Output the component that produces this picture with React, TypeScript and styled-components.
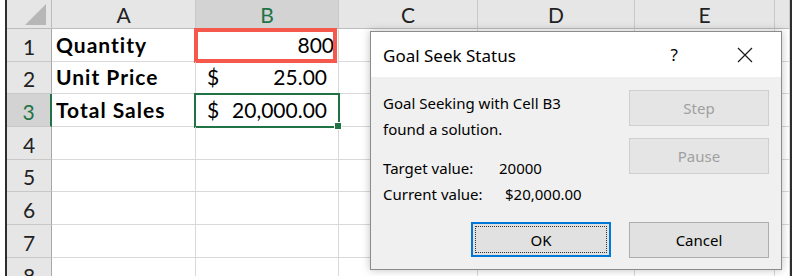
import { createGlobalStyle, styled } from 'styled-components';

const GlobalStyle = createGlobalStyle`
  html, body {
    margin: 0;
    padding: 0;
    background: #ffffff;
  }
`;

const columns = ['A', 'B', 'C', 'D', 'E', ''];
const rowHeights = [33, 32, 33, 33, 32, 33, 33, 33];

type CellData = { text?: string; bold?: boolean; align?: 'left' | 'right' | 'split'; mark?: 'red' | 'green' };

const data: Record<number, Record<number, CellData>> = {
  1: { 0: { text: 'Quantity', bold: true }, 1: { text: '800', align: 'right', mark: 'red' } },
  2: { 0: { text: 'Unit Price', bold: true }, 1: { text: '25.00', align: 'split' } },
  3: { 0: { text: 'Total Sales', bold: true }, 1: { text: '20,000.00', align: 'split', mark: 'green' } },
};

const App = () => {
  return (
    <Page>
      <GlobalStyle />
      <Sheet>
        <Corner>
          <CornerTriangle />
        </Corner>
        {columns.map((col, i) => (
          <ColHeader key={col + i} $active={col === 'B'}>
            {col}
          </ColHeader>
        ))}
        {rowHeights.map((h, r) => {
          const row = r + 1;
          return [
            <RowHeader key={`h${row}`} $active={row === 3} $height={h}>
              {row}
            </RowHeader>,
            ...columns.map((_, c) => {
              const cell = data[row]?.[c];
              return (
                <Cell key={`${row}-${c}`} $bold={cell?.bold} $align={cell?.align} $mark={cell?.mark}>
                  {cell?.align === 'split' && <span>$</span>}
                  {cell?.text && <span>{cell.text}</span>}
                  {cell?.mark === 'green' && <FillHandle />}
                </Cell>
              );
            }),
          ];
        })}

        <Dialog>
          <TitleBar>
            <Title>Goal Seek Status</Title>
            <TitleIcons>
              <HelpMark>?</HelpMark>
              <svg width="16" height="16" viewBox="0 0 16 16">
                <path d="M1 1 L15 15 M15 1 L1 15" stroke="#1a1a1a" strokeWidth="1.2" fill="none" />
              </svg>
            </TitleIcons>
          </TitleBar>
          <DialogBody>
            <TopRow>
              <Messages>
                <Line>Goal Seeking with Cell B3</Line>
                <Line>found a solution.</Line>
                <Spacer />
                <Line>
                  <Label $width={116}>Target value:</Label>
                  <span>20000</span>
                </Line>
                <Line>
                  <Label $width={122}>Current value:</Label>
                  <span>$20,000.00</span>
                </Line>
              </Messages>
              <SideButtons>
                <Button disabled>Step</Button>
                <Button disabled>Pause</Button>
              </SideButtons>
            </TopRow>
            <Footer>
              <Button $default>
                <FocusRing>OK</FocusRing>
              </Button>
              <Button>Cancel</Button>
            </Footer>
          </DialogBody>
        </Dialog>
      </Sheet>
    </Page>
  );
};
export default App;

const sheetFont = `Lato, "Liberation Sans", sans-serif`;
const uiFont = `"Noto Sans", "Open Sans", sans-serif`;
const green = '#217346';

const Page = styled.div`
  width: 793px;
  height: 276px;
  padding-left: 5px;
  box-sizing: border-box;
  overflow: hidden;
`;

const Sheet = styled.div`
  position: relative;
  width: 787px;
  box-sizing: border-box;
  border-left: 2px solid #2e2e2e;
  border-right: 2px solid #2e2e2e;
  display: grid;
  grid-template-columns: 45px 144px 143px 139px 157px 140px 15px;
  grid-template-rows: 29px ${rowHeights.map((h) => `${h}px`).join(' ')};
  font-family: ${sheetFont};
  color: #000;
`;

const Corner = styled.div`
  position: relative;
  background: #e6e6e6;
  border-right: 1px solid #bcbcbc;
  border-bottom: 1px solid #bcbcbc;
`;

const CornerTriangle = styled.div`
  position: absolute;
  left: 18px;
  top: 4px;
  width: 21px;
  height: 21px;
  background: #b7b7b7;
  clip-path: polygon(100% 0, 100% 100%, 0 100%);
`;

const ColHeader = styled.div<{ $active?: boolean }>`
  display: flex;
  align-items: center;
  justify-content: center;
  background: ${(p) => (p.$active ? '#d3d3d3' : '#e6e6e6')};
  color: ${(p) => (p.$active ? green : '#222')};
  border-right: 1px solid #c8c8c8;
  border-bottom: 1px solid #bcbcbc;
  font-size: 21px;
  padding-top: 1px;
  box-sizing: border-box;
`;

const RowHeader = styled.div<{ $active?: boolean; $height: number }>`
  display: flex;
  align-items: center;
  justify-content: center;
  background: ${(p) => (p.$active ? '#d3d3d3' : '#e6e6e6')};
  color: ${(p) => (p.$active ? green : '#222')};
  border-right: ${(p) => (p.$active ? `2px solid ${green}` : '1px solid #a8a8a8')};
  border-bottom: 1px solid #c8c8c8;
  font-size: 21px;
  padding-top: 2px;
  box-sizing: border-box;
`;

const Cell = styled.div<{ $bold?: boolean; $align?: string; $mark?: string }>`
  position: relative;
  display: flex;
  align-items: flex-end;
  justify-content: ${(p) => (p.$align === 'right' ? 'flex-end' : p.$align === 'split' ? 'space-between' : 'flex-start')};
  padding: 0 ${(p) => (p.$align === 'split' ? '11px' : '4px')} 4px ${(p) => (p.$align === 'split' ? '11px' : '4px')};
  border-right: 1px solid #d9d9d9;
  border-bottom: 1px solid #d9d9d9;
  box-sizing: border-box;
  font-size: 21px;
  font-weight: ${(p) => (p.$bold ? 700 : 400)};
  letter-spacing: ${(p) => (p.$bold ? '1px' : '0')};
  white-space: nowrap;

  &::after {
    content: '';
    display: ${(p) => (p.$mark ? 'block' : 'none')};
    position: absolute;
    left: -2px;
    top: -1px;
    right: ${(p) => (p.$mark === 'red' ? '1px' : '-2px')};
    bottom: -2px;
    border: ${(p) => (p.$mark === 'red' ? '4px solid #f4594c' : `2px solid ${green}`)};
    pointer-events: none;
  }
`;

const FillHandle = styled.div`
  position: absolute;
  right: -4px;
  bottom: -4px;
  width: 6px;
  height: 6px;
  background: ${green};
  border: 1px solid #fff;
  z-index: 1;
`;

const Dialog = styled.div`
  position: absolute;
  left: 363px;
  top: 31px;
  width: 412px;
  height: 239px;
  box-sizing: border-box;
  border: 1px solid #8c8c8c;
  background: #f0f0f0;
  box-shadow: 0 0 8px rgba(0, 0, 0, 0.25);
  font-family: ${uiFont};
  color: #000;
  display: flex;
  flex-direction: column;
  z-index: 2;
`;

const TitleBar = styled.div`
  height: 45px;
  background: #ffffff;
  display: flex;
  align-items: center;
  justify-content: space-between;
  padding: 0 28px 0 12px;
`;

const Title = styled.div`
  font-size: 17px;
  padding-top: 2px;
`;

const TitleIcons = styled.div`
  display: flex;
  align-items: center;
  gap: 59px;
`;

const HelpMark = styled.span`
  font-size: 17px;
`;

const DialogBody = styled.div`
  flex: 1;
  display: flex;
  flex-direction: column;
  justify-content: space-between;
  padding: 13px 12px 11px 12px;
`;

const TopRow = styled.div`
  display: flex;
  justify-content: space-between;
`;

const Messages = styled.div`
  font-size: 15px;
`;

const Line = styled.div`
  height: 26px;
  line-height: 26px;
  display: flex;
`;

const Spacer = styled.div`
  height: 13px;
`;

const Label = styled.span<{ $width: number }>`
  width: ${(p) => p.$width}px;
`;

const SideButtons = styled.div`
  display: flex;
  flex-direction: column;
  gap: 12px;
`;

const Footer = styled.div`
  display: flex;
  justify-content: flex-end;
  gap: 18px;
`;

const Button = styled.button<{ $default?: boolean }>`
  width: 140px;
  height: ${(p) => (p.$default ? '35px' : '36px')};
  box-sizing: border-box;
  padding: 0;
  font-family: ${uiFont};
  font-size: 15px;
  color: #000;
  background: #e1e1e1;
  border: ${(p) => (p.$default ? '2px solid #0078d7' : '1px solid #adadad')};
  display: flex;
  align-items: center;
  justify-content: center;

  &:disabled {
    color: #a0a0a0;
    background: #e5e5e5;
    border-color: #cfcfcf;
  }
`;

const FocusRing = styled.span`
  align-self: stretch;
  flex: 1;
  margin: 2px;
  border: 1px dotted #333;
  display: flex;
  align-items: center;
  justify-content: center;
`;
